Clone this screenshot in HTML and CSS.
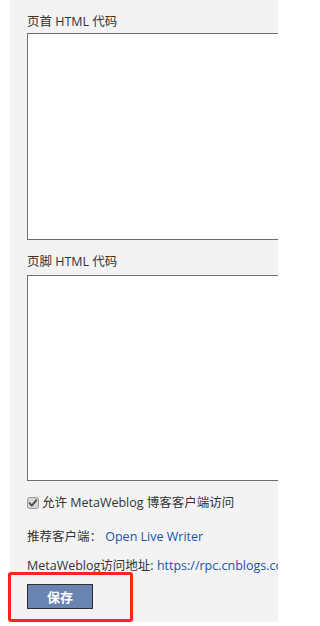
FILE: index.html
```html
<!DOCTYPE html>
<html lang="zh">
<head>
<meta charset="utf-8">
<link rel="stylesheet" href="styles.css">
</head>
<body>
<div class="panel">
  <div class="label">页首 HTML 代码</div>
  <div class="area area-top"></div>
  <div class="label label-second">页脚 HTML 代码</div>
  <div class="area area-bottom"></div>
  <div class="row check-row">
    <span class="check">
      <svg width="12" height="12" viewBox="0 0 12 12"><rect x="0.5" y="0.5" width="11" height="11" rx="2" fill="#d6d6d6" stroke="#9a9a9a"/><path d="M2.6 6.2 L4.8 8.6 L9.4 3.2" fill="none" stroke="#4a4a4a" stroke-width="1.8" stroke-linecap="round" stroke-linejoin="round"/></svg>
    </span>
    <span>允许 MetaWeblog 博客客户端访问</span>
  </div>
  <div class="row client-row">推荐客户端： <a class="link">Open Live Writer</a></div>
  <div class="row addr-row">MetaWeblog访问地址: <a class="link">https://rpc.cnblogs.com/metaweblog/</a></div>
  <button class="save">保存</button>
</div>
<div class="highlight"></div>
</body>
</html>
```
FILE: styles.css
```css
html, body {
  margin: 0;
  padding: 0;
  background: #ffffff;
  overflow: hidden;
}
body {
  position: relative;
  width: 278px;
  height: 626px;
  font-family: "Open Sans", "Noto Sans CJK SC", sans-serif;
  font-size: 12.5px;
  color: #333333;
}
.panel {
  margin-left: 10px;
  background: #f3f3f3;
  height: 622px;
  box-sizing: border-box;
  padding: 12px 0 0 17px;
  overflow: hidden;
  display: flex;
  flex-direction: column;
  align-items: flex-start;
}
.label {
  line-height: 20px;
  height: 20px;
  white-space: nowrap;
}
.label-second {
  margin-top: 12px;
}
.area {
  width: 320px;
  flex: none;
  box-sizing: border-box;
  background: #ffffff;
  border: 1px solid #6e6e6e;
}
.area-top {
  margin-top: 1px;
  height: 207px;
}
.area-bottom {
  margin-top: 3px;
  height: 206px;
}
.row {
  line-height: 20px;
  height: 20px;
  white-space: nowrap;
  display: flex;
  align-items: center;
}
.check-row {
  margin-top: 12px;
}
.check {
  width: 12px;
  height: 12px;
  margin-right: 3px;
  display: inline-flex;
}
.client-row {
  margin-top: 14px;
  white-space: pre;
}
.addr-row {
  margin-top: 9px;
  white-space: pre;
}
.link {
  color: #2152a8;
  text-decoration: none;
}
.save {
  margin-top: 8px;
  width: 66px;
  height: 25px;
  flex: none;
  background: #6a84b1;
  border: 1px solid #2f2f2f;
  color: #ffffff;
  font-family: "Noto Sans CJK SC", sans-serif;
  font-weight: bold;
  font-size: 13px;
  padding: 0;
}
.highlight {
  position: absolute;
  left: 8px;
  top: 572px;
  width: 125px;
  height: 50px;
  box-sizing: border-box;
  border: 3px solid #ff2417;
  border-radius: 3px;
}
```
